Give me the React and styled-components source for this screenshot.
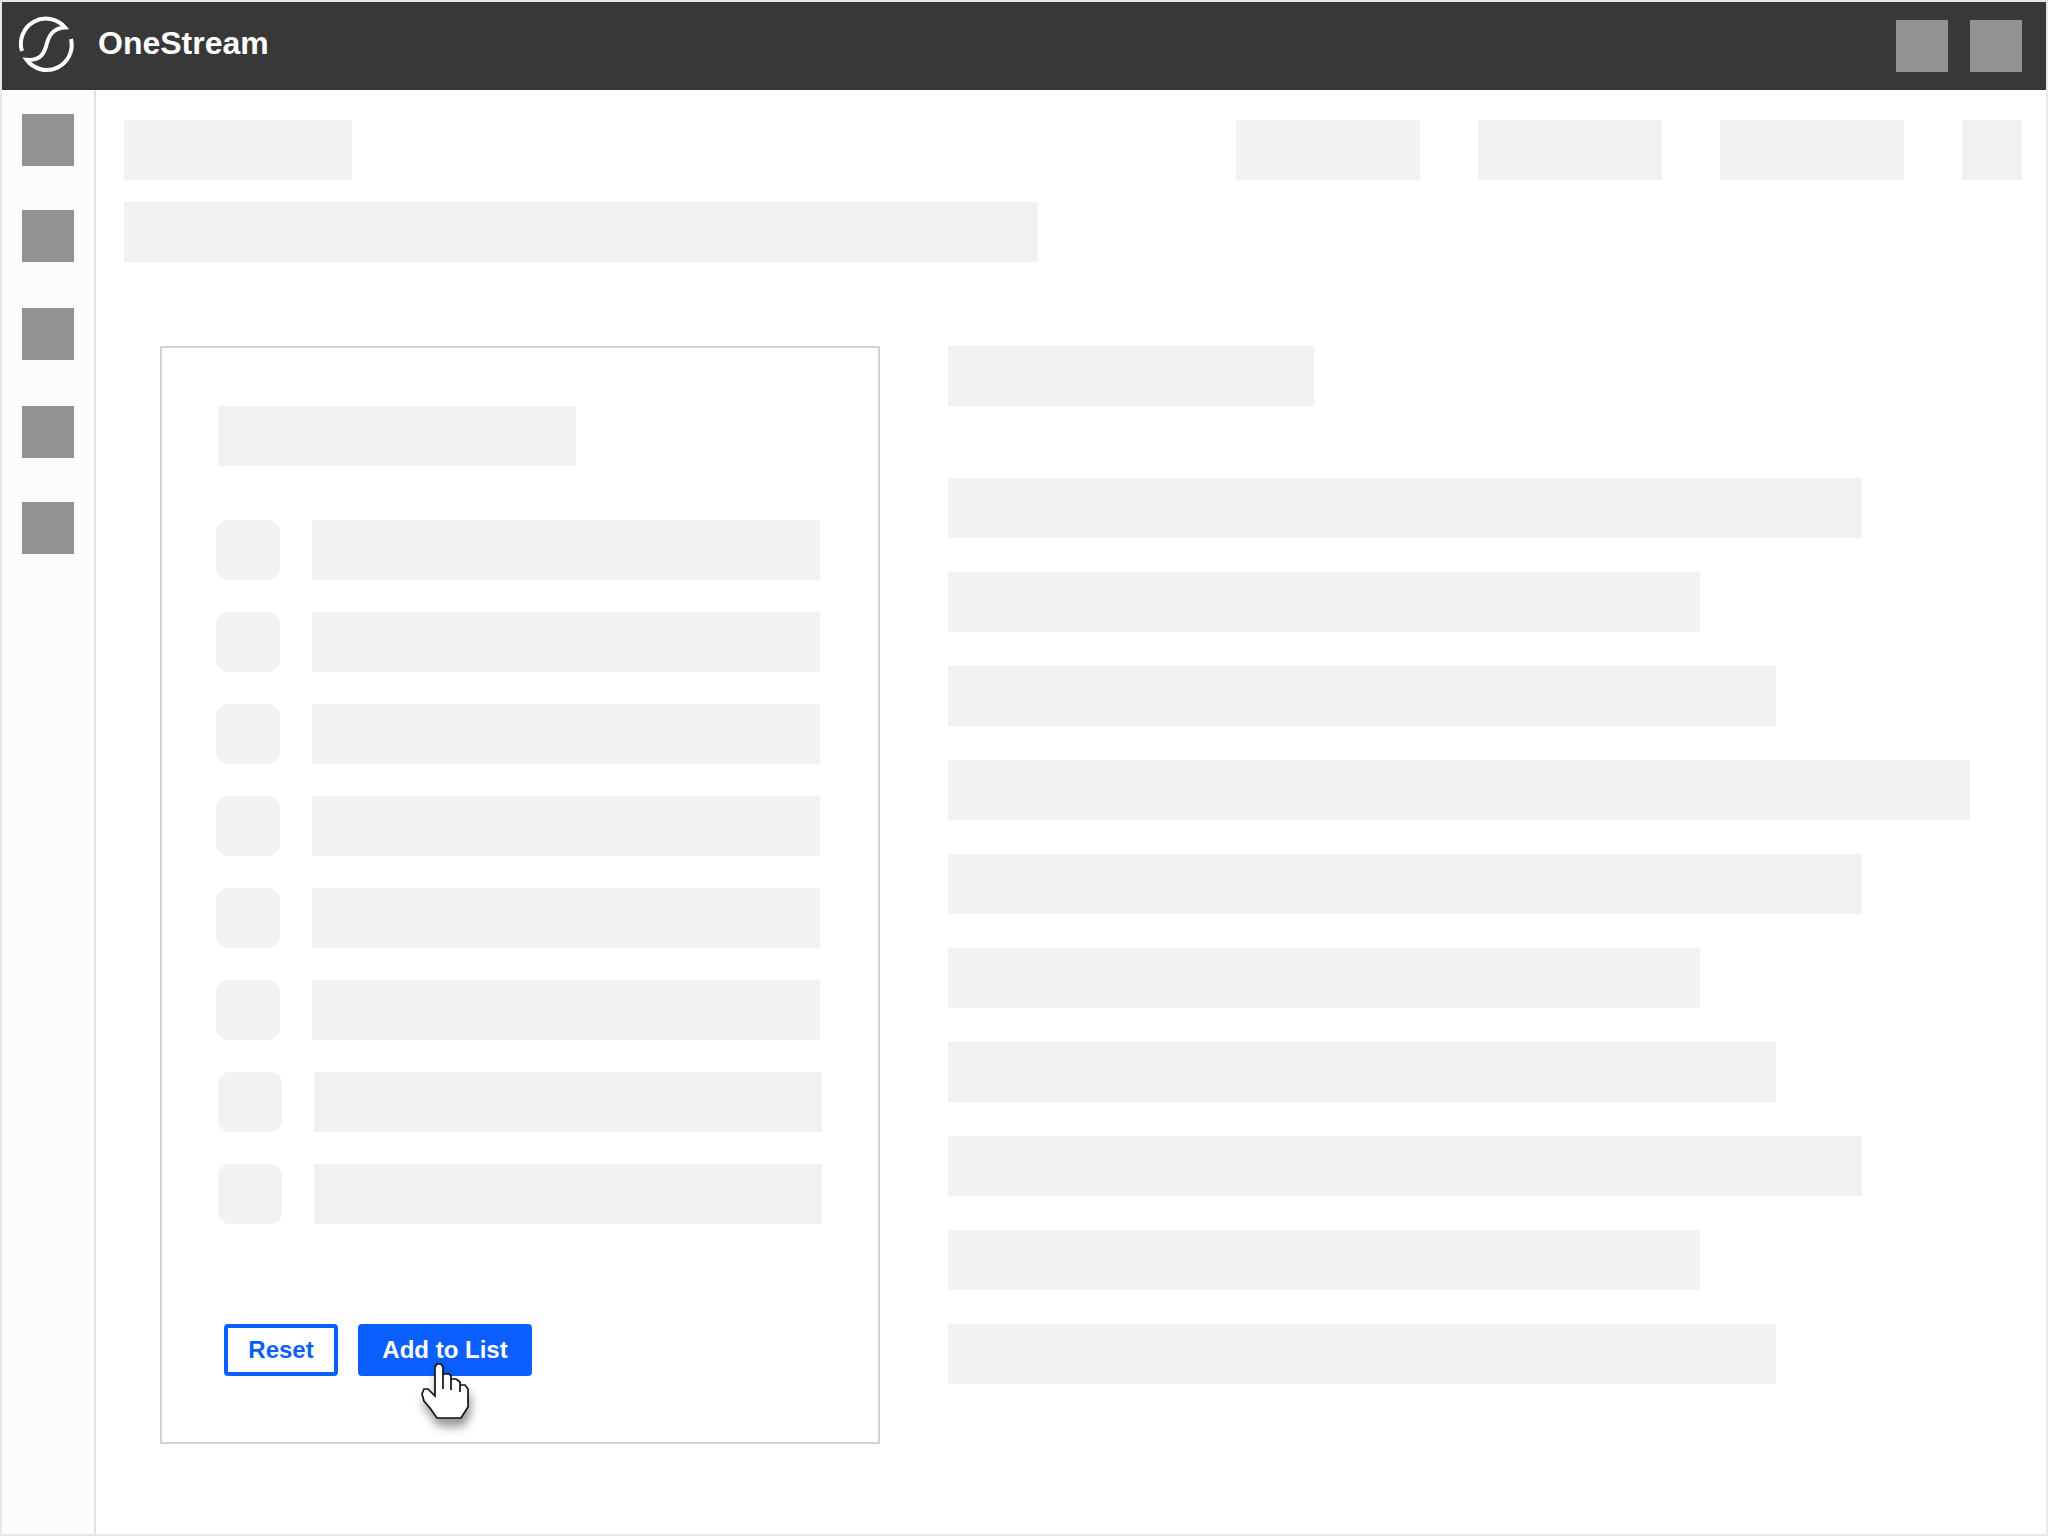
import styled, { createGlobalStyle } from "styled-components";

const sideGaps = [24, 44, 46, 46, 44];
const topTabs = [184, 184, 184, 60];
const checkRows = [0, 0, 0, 0, 0, 0, 2, 2];
const textWidths = [914, 752, 828, 1022, 914, 752, 828, 914, 752, 828];

function Logo() {
  return (
    <LogoSvg viewBox="0 0 80 70" fill="none" stroke="#fff" strokeWidth="4" strokeMiterlimit="12">
      <path d="M12 41 A25 25 0 0 1 55 17.5 C44 18 39.5 24 37 33 C34.5 43 31 51 16.6 49.8 A25 25 0 0 0 61 29" />
    </LogoSvg>
  );
}

function HandCursor() {
  return (
    <CursorSvg viewBox="0 0 70 80">
      <path
        d="M25 36 V7 L27 4 H31 L33 7 V14 H39 L41 16 V19 H46 L50 22 V25 H55 L58 29 V47 L51 58 H27 L20 48 L14 41 L12 34 L14 29 H18 Z"
        fill="#fff"
        stroke="#111"
        strokeWidth="1.7"
        strokeLinejoin="miter"
      />
      <path d="M33 14 V29 M41 19 V30 M50 25 V32" fill="none" stroke="#111" strokeWidth="1.7" />
    </CursorSvg>
  );
}

export default function App() {
  return (
    <>
      <GlobalStyle />
      <Frame>
        <Header>
          <Brand>
            <Logo />
            <BrandName>OneStream</BrandName>
          </Brand>
          <HeaderActions>
            <IconBox />
            <IconBox />
          </HeaderActions>
        </Header>
        <Body>
          <Sidebar>
            {sideGaps.map((gap, i) => (
              <SideIcon key={i} $gap={gap} />
            ))}
          </Sidebar>
          <Main>
            <TopRow>
              <Skeleton $w={228} />
              <TopTabs>
                {topTabs.map((w, i) => (
                  <Skeleton key={i} $w={w} />
                ))}
              </TopTabs>
            </TopRow>
            <SubTitle $w={914} />
            <Columns>
              <Panel>
                <PanelTitle $w={358} />
                <CheckList>
                  {checkRows.map((shift, i) => (
                    <CheckRow key={i} $shift={shift}>
                      <CheckBox />
                      <Skeleton $w={508} />
                    </CheckRow>
                  ))}
                </CheckList>
                <Buttons>
                  <ResetButton>Reset</ResetButton>
                  <AddWrap>
                    <AddButton>Add to List</AddButton>
                    <HandCursor />
                  </AddWrap>
                </Buttons>
              </Panel>
              <TextColumn>
                <Skeleton $w={366} />
                <TextLines>
                  {textWidths.map((w, i) => (
                    <Skeleton key={i} $w={w} />
                  ))}
                </TextLines>
              </TextColumn>
            </Columns>
          </Main>
        </Body>
      </Frame>
    </>
  );
}

const GlobalStyle = createGlobalStyle`
  html, body {
    margin: 0;
    padding: 0;
    background: #fff;
  }
  * {
    box-sizing: border-box;
  }
`;
const Frame = styled.div`
  width: 2048px;
  height: 1536px;
  border: 2px solid #e8e8e8;
  display: flex;
  flex-direction: column;
  font-family: "Liberation Sans", Arial, sans-serif;
  background: #fff;
`;
const Header = styled.header`
  height: 88px;
  flex: none;
  background: #383838;
  display: flex;
  align-items: center;
  justify-content: space-between;
  padding: 0 24px 0 8px;
`;
const Brand = styled.div`
  display: flex;
  align-items: center;
  gap: 8px;
  padding-bottom: 2px;
`;
const LogoSvg = styled.svg`
  width: 80px;
  height: 70px;
  display: block;
`;
const BrandName = styled.span`
  color: #fff;
  font-size: 32px;
  font-weight: 700;
  margin-bottom: 3px;
`;
const HeaderActions = styled.div`
  display: flex;
  gap: 22px;
`;
const IconBox = styled.div`
  width: 52px;
  height: 52px;
  background: #929292;
`;
const SideIcon = styled(IconBox)`
  margin-top: ${(p) => p.$gap}px;
`;
const Body = styled.div`
  flex: 1;
  display: flex;
  min-height: 0;
`;
const Sidebar = styled.nav`
  width: 94px;
  flex: none;
  background: #fcfcfc;
  border-right: 2px solid #e2e2e2;
  padding-left: 20px;
`;
const Main = styled.main`
  flex: 1;
  padding: 30px 24px 0 28px;
`;
const Skeleton = styled.div`
  width: ${(p) => p.$w}px;
  height: 60px;
  flex: none;
  background: #f2f2f2;
`;
const TopRow = styled.div`
  display: flex;
  justify-content: space-between;
`;
const TopTabs = styled.div`
  display: flex;
  gap: 58px;
`;
const SubTitle = styled(Skeleton)`
  margin-top: 22px;
`;
const Columns = styled.div`
  display: flex;
  gap: 68px;
  margin: 84px 0 0 36px;
`;
const Panel = styled.section`
  width: 720px;
  height: 1098px;
  border: 2px solid #d2d2d2;
  padding: 58px 0 0 54px;
`;
const PanelTitle = styled(Skeleton)`
  margin-left: 2px;
`;
const CheckList = styled.div`
  margin-top: 54px;
  display: flex;
  flex-direction: column;
  gap: 32px;
`;
const CheckRow = styled.div`
  display: flex;
  gap: 32px;
  margin-left: ${(p) => p.$shift}px;
`;
const CheckBox = styled.div`
  width: 64px;
  height: 60px;
  border-radius: 12px;
  background: #f2f2f2;
`;
const Buttons = styled.div`
  display: flex;
  gap: 20px;
  margin: 100px 0 0 8px;
`;
const ResetButton = styled.button`
  width: 114px;
  height: 52px;
  padding: 0;
  border: 4px solid #0b5fff;
  border-radius: 4px;
  background: #fff;
  color: #0b5fff;
  font: 700 24px "Liberation Sans", Arial, sans-serif;
`;
const AddWrap = styled.div`
  position: relative;
`;
const AddButton = styled.button`
  width: 174px;
  height: 52px;
  padding: 0;
  border: none;
  border-radius: 4px;
  background: #0b5fff;
  color: #fff;
  font: 700 24px "Liberation Sans", Arial, sans-serif;
`;
const CursorSvg = styled.svg`
  position: absolute;
  left: 52px;
  top: 36px;
  width: 70px;
  height: 80px;
  overflow: visible;
  filter: drop-shadow(2px 8px 5px rgba(0, 0, 0, 0.4));
`;
const TextColumn = styled.div`
  display: flex;
  flex-direction: column;
`;
const TextLines = styled.div`
  margin-top: 72px;
  display: flex;
  flex-direction: column;
  gap: 34px;
`;
